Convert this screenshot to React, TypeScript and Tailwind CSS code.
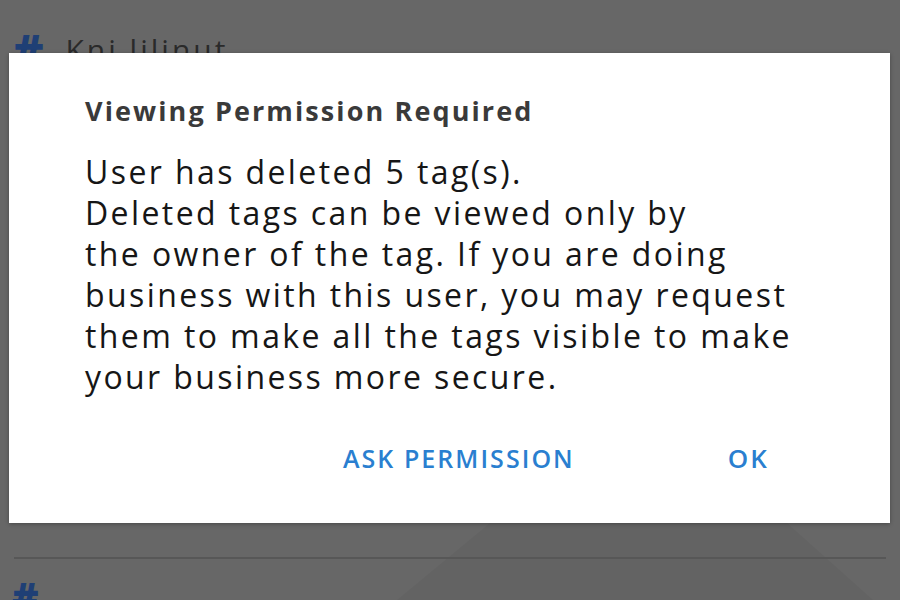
import React from "react";

export default function App() {
  const font = { fontFamily: '"Open Sans", "Noto Sans", sans-serif' };
  return (
    <div className="relative w-[900px] h-[600px] overflow-hidden bg-[#676767]" style={font}>
      {/* background page */}
      <svg className="absolute left-0 top-0" width="900" height="600">
        <polygon points="490,523 787,523 873,600 397,600" fill="#000" fillOpacity="0.035" />
      </svg>
      <div className="relative flex flex-col">
        <div className="flex items-center gap-[22px] pl-[13px] h-[44px] mt-[28px]">
          <span className="text-[46px] font-extrabold text-[#1f3f75] leading-none">#</span>
          <span className="text-[30px] text-[#2a2a2a] leading-none tracking-[3px]">Kni lilinut</span>
        </div>
        <div className="mt-[485px] mx-[14px] h-[2px] bg-[#575757]" />
        <div className="pl-[12px] mt-[18px]">
          <span className="text-[40px] font-extrabold text-[#1f3f75] leading-none">#</span>
        </div>
      </div>

      {/* dialog */}
      <div className="absolute left-[9px] top-[53px] w-[881px] h-[470px] bg-white shadow-[0_1px_4px_rgba(0,0,0,0.3)] flex flex-col pl-[76px] pt-[28px]">
        <div className="text-[27px] font-bold text-[#3a3a3a] leading-[60px] whitespace-nowrap tracking-[2.1px]">
          Viewing Permission Required
        </div>
        <div className="mt-[10px] text-[32px] text-[#161616] leading-[41px] whitespace-nowrap tracking-[2.4px]">
          User has deleted 5 tag(s).
          <br />
          Deleted tags can be viewed only by
          <br />
          the owner of the tag. If you are doing
          <br />
          business with this user, you may request
          <br />
          them to make all the tags visible to make
          <br />
          your business more secure.
        </div>
        <div className="mt-[42px] flex items-center text-[25px] font-semibold text-[#2a7fd0] tracking-[2.05px]">
          <span className="ml-[258px]">ASK PERMISSION</span>
          <span className="ml-[153px] text-[26px]">OK</span>
        </div>
      </div>
    </div>
  );
}
